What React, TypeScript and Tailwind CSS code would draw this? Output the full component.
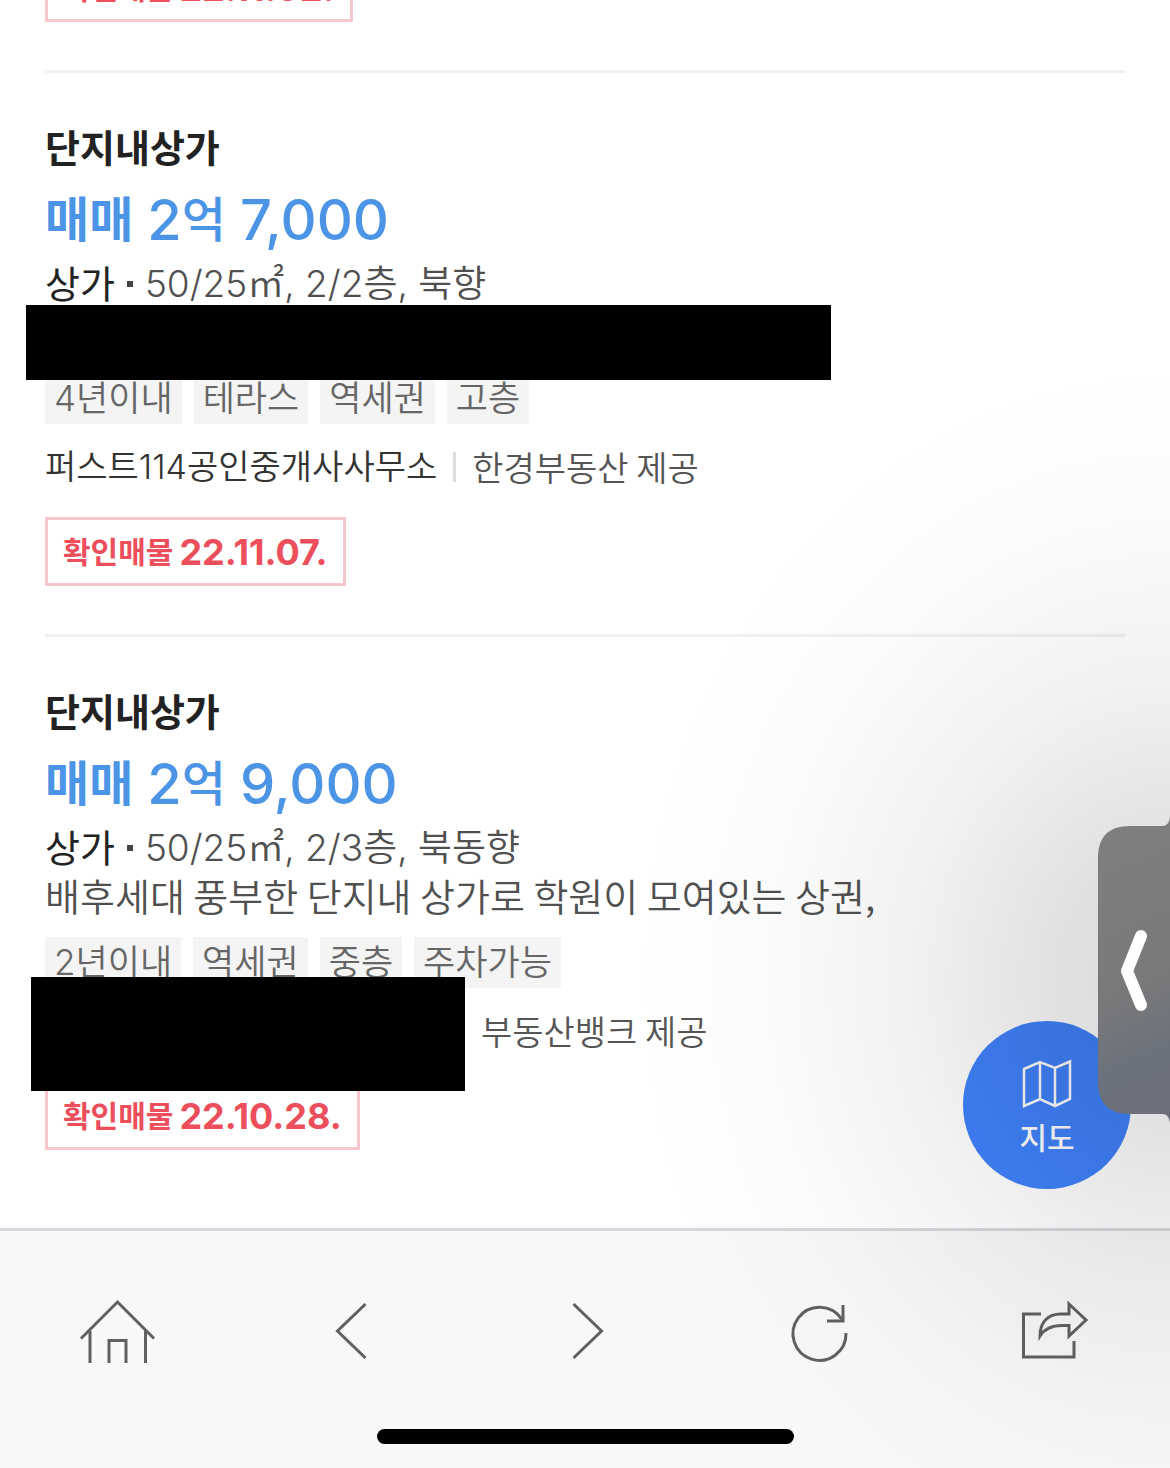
import React from 'react';

type Listing = {
  id: number;
  name: string;
  price: string;
  spec: string;
  description?: string;
  tags: string[];
  agent?: string;
  provider: string;
  confirmed: string;
  maskClass: string;
};

const listings: Listing[] = [
  {
    id: 1,
    name: '단지내상가',
    price: '7,000',
    spec: '50/25㎡, 2/2층, 북향',
    tags: ['4년이내', '테라스', '역세권', '고층'],
    agent: '퍼스트114공인중개사사무소',
    provider: '한경부동산 제공',
    confirmed: '22.11.07.',
    maskClass: '-left-[19px] top-[232px] h-[75px] w-[805px]',
  },
  {
    id: 2,
    name: '단지내상가',
    price: '9,000',
    spec: '50/25㎡, 2/3층, 북동향',
    description: '배후세대 풍부한 단지내 상가로 학원이 모여있는 상권,',
    tags: ['2년이내', '역세권', '중층', '주차가능'],
    provider: '부동산뱅크 제공',
    confirmed: '22.10.28.',
    maskClass: '-left-[14px] top-[340px] h-[114px] w-[434px]',
  },
];

const ConfirmBadge = ({ date }: { date: string }) => (
  <div className="flex h-[69px] w-fit items-center gap-[6px] border-3 border-[#f7c6ca] px-[15px] font-bold text-[#ec4f5b]">
    <span className="text-[30px] leading-none">확인매물</span>
    <span className="text-[36px] leading-none">{date}</span>
  </div>
);

const ListingCard = ({ item }: { item: Listing }) => (
  <article className="relative border-t-3 border-[#f0f0f0] pt-[49px] pb-[48px]">
    <h2 className="text-[38px] leading-[52px] font-bold text-[#222]">{item.name}</h2>
    <p className="mt-[6px] flex h-[80px] items-center gap-[14px] text-[56px] leading-[80px] font-medium text-[#4c94e6]">
      <span className="text-[48px] font-bold">매매</span>
      <span className="flex items-center">
        2<span className="text-[48px]">억</span>
      </span>
      <span>{item.price}</span>
    </p>
    <p className="flex h-[48px] items-center text-[37px] leading-[46px] font-[350] text-[#505050]">
      <span className="text-[38px] font-normal text-[#222]">상가</span>
      <span className="mx-[12px] size-[6px] bg-[#444]" />
      <span>{item.spec}</span>
    </p>
    <p className="h-[48px] font-['Noto_Sans_CJK_KR',sans-serif] text-[38px] leading-[46px] font-[350] text-[#505050]">
      {item.description}
    </p>
    <ul className="mt-[17px] flex gap-[12px]">
      {item.tags.map((tag) => (
        <li key={tag} className="h-[51px] bg-[#f4f4f4] px-[9px] text-[35px] leading-[50px] font-[350] text-[#666]">
          {tag}
        </li>
      ))}
    </ul>
    <div className="mt-[19px] flex h-[48px] items-center text-[34px] leading-[48px] font-[350]">
      {item.agent ? (
        <span className="text-[#333]">{item.agent}</span>
      ) : (
        <span className="w-[401px]" />
      )}
      <span className="mx-[16px] h-[30px] w-[3px] bg-[#ddd]" />
      <span className="font-['Noto_Sans_CJK_KR',sans-serif] text-[#555]">{item.provider}</span>
    </div>
    <div className="mt-[26px]">
      <ConfirmBadge date={item.confirmed} />
    </div>
    <div className={`absolute bg-black ${item.maskClass}`} />
  </article>
);

const NavIcon = ({ children }: { children: React.ReactNode }) => (
  <svg width="80" height="80" viewBox="0 0 80 80" fill="none" stroke="#5f6061" strokeWidth="3" aria-hidden="true">
    {children}
  </svg>
);

const navItems = [
  {
    label: '홈',
    icon: <path d="M4 46.5 40.5 10 77 46.5M13 39V71M68.5 39V71M32 71V48.5H49V71" />,
  },
  { label: '뒤로', icon: <path d="M54.500 12 26.500 39 54.500 66" /> },
  { label: '앞으로', icon: <path d="M28.500 12 56.500 39 28.500 66" /> },
  {
    label: '새로고침',
    icon: <path d="M67 41A26.500 26.500 0 1 1 62.500 27M64 13V29H48" />,
  },
  {
    label: '공유',
    icon: (
      <path d="M28 22H10.500V65H61V49M56 12 73 28 56 44V33.500H49C40 33.500 32 36 27 44C27 30 35 22 48 22H56Z" />
    ),
  },
];

const BottomNav = () => (
  <nav className="h-[240px] border-t-3 border-[#d8d7dd] bg-[#f8f8f8]">
    <div className="grid h-[198px] grid-cols-5">
      {navItems.map((item) => (
        <button key={item.label} type="button" aria-label={item.label} className="flex items-center justify-center pt-[4px]">
          <NavIcon>{item.icon}</NavIcon>
        </button>
      ))}
    </div>
    <div className="relative z-10 mx-auto h-[15px] w-[417px] rounded-full bg-black" />
  </nav>
);

const App = () => {
  return (
    <div className="relative min-h-screen overflow-hidden bg-white font-[Inter,'Noto_Sans_CJK_KR',sans-serif]">
      <main className="px-[45px] pb-[30px] whitespace-nowrap">
        <div className="mb-[48px] flex h-[22px] flex-col justify-end overflow-hidden">
          <div className="shrink-0">
            <ConfirmBadge date="22.11.02." />
          </div>
        </div>
        {listings.map((item) => (
          <ListingCard key={item.id} item={item} />
        ))}
      </main>
      <BottomNav />

      {/* floating map button */}
      <button
        type="button"
        className="absolute right-[39px] bottom-[279px] flex size-[168px] flex-col items-center rounded-full bg-[#4082fb] pt-[38px] text-white"
      >
        <svg width="50" height="50" viewBox="0 0 50 50" fill="none" stroke="currentColor" strokeWidth="2.500" aria-hidden="true">
          <path d="M2 10 18 3 33 9 48 2.500V40L33 47 18 40 2 47ZM18 3V40M33 9V47" />
        </svg>
        <span className="mt-[9px] text-[30px] leading-[40px] font-medium">지도</span>
      </button>

      {/* shade around the side handle */}
      <div className="pointer-events-none absolute inset-0 bg-[radial-gradient(ellipse_540px_620px_at_100%_980px,rgba(0,0,0,0.14),rgba(0,0,0,0.12)_20%,rgba(0,0,0,0.055)_48%,rgba(0,0,0,0.015)_75%,transparent)]" />

      <button type="button" aria-label="열기" className="absolute right-0 bottom-[345px]">
        <svg width="72" height="306" viewBox="0 0 72 306" aria-hidden="true">
          <defs>
            <linearGradient id="handle" x1="0" y1="0" x2="0.1" y2="1">
              <stop offset="0" stopColor="#7f7f7f" />
              <stop offset="0.600" stopColor="#797979" />
              <stop offset="0.850" stopColor="#6b717c" />
              <stop offset="1" stopColor="#6c707a" />
            </linearGradient>
          </defs>
          <path
            d="M72 0C71 6 69 9 64 9H32C10 9 0 20 0 42V264C0 286 10 297 32 297H64C69 297 71 300 72 306Z"
            fill="url(#handle)"
          />
          <path d="M43 119 29 154 43 188" fill="none" stroke="#fff" strokeWidth="12" strokeLinecap="round" strokeLinejoin="round" />
        </svg>
      </button>
    </div>
  );
};

export default App;
